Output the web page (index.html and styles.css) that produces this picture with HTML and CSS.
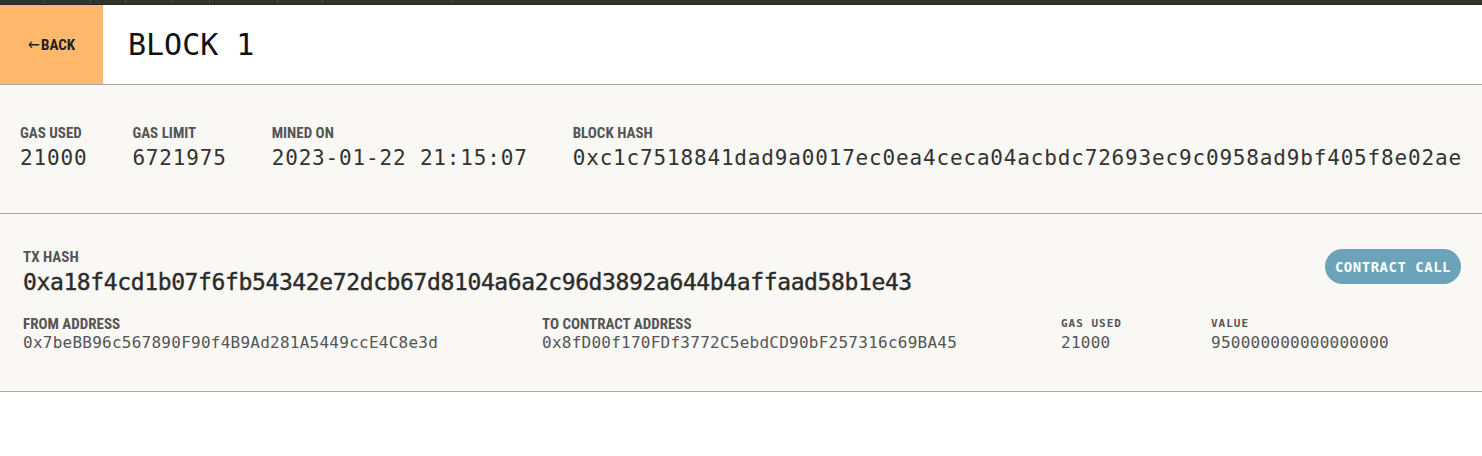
FILE: index.html
```html
<!DOCTYPE html>
<html lang="en">
<head>
<meta charset="utf-8">
<title>Block 1</title>
<link rel="stylesheet" href="styles.css">
</head>
<body>
<div class="topbar">
  <span class="tab tab-a"></span><span class="tab tab-b"></span><span class="tab tab-c"></span><span class="tab tab-d"></span><span class="tab tab-e"></span><span class="tab tab-f"></span><span class="tab tab-g"></span><span class="tab tab-h"></span>
</div>
<header class="header">
  <a class="back" href="#"><span class="arrow">&larr;</span>BACK</a>
  <h1 class="title">BLOCK 1</h1>
</header>
<section class="block-info">
  <div class="stat"><div class="label">GAS USED</div><div class="value">21000</div></div>
  <div class="stat"><div class="label">GAS LIMIT</div><div class="value">6721975</div></div>
  <div class="stat"><div class="label">MINED ON</div><div class="value">2023-01-22 21:15:07</div></div>
  <div class="stat"><div class="label">BLOCK HASH</div><div class="value">0xc1c7518841dad9a0017ec0ea4ceca04acbdc72693ec9c0958ad9bf405f8e02ae</div></div>
</section>
<section class="tx">
  <div class="tx-top">
    <div class="tx-id">
      <div class="label">TX HASH</div>
      <div class="tx-hash">0xa18f4cd1b07f6fb54342e72dcb67d8104a6a2c96d3892a644b4affaad58b1e43</div>
    </div>
    <span class="pill">CONTRACT CALL</span>
  </div>
  <div class="tx-grid">
    <div class="cell"><div class="label">FROM ADDRESS</div><div class="addr">0x7beBB96c567890F90f4B9Ad281A5449ccE4C8e3d</div></div>
    <div class="cell"><div class="label">TO CONTRACT ADDRESS</div><div class="addr">0x8fD00f170FDf3772C5ebdCD90bF257316c69BA45</div></div>
    <div class="cell"><div class="label label-mono">GAS USED</div><div class="addr">21000</div></div>
    <div class="cell"><div class="label label-mono">VALUE</div><div class="addr">950000000000000000</div></div>
  </div>
</section>
</body>
</html>
```
FILE: styles.css
```css
* { box-sizing: border-box; }
html, body { margin: 0; padding: 0; background: #ffffff; }
body { font-family: "DejaVu Sans Mono", monospace; color: #333; }

.topbar {
  display: flex;
  height: 5px;
  background: #34302c;
  border-bottom: 1px solid #2a2724;
}
.tab { height: 100%; border-right: 1px solid #4a4541; }
.tab-a { width: 44px; }
.tab-b { width: 47px; }
.tab-c { width: 35px; }
.tab-d { width: 47px; }
.tab-e { width: 37px; }
.tab-f { width: 68px; }
.tab-g { width: 45px; }
.tab-h { width: 129px; }

.header {
  display: flex;
  align-items: center;
  height: 80px;
  border-bottom: 1px solid #a8a7a5;
  background: #fff;
}
.back {
  display: flex;
  align-items: center;
  justify-content: center;
  gap: 1px;
  width: 103px;
  height: 100%;
  background: #ffb86c;
  color: #222;
  text-decoration: none;
  font-family: "Roboto Condensed", "DejaVu Sans Condensed", "Liberation Sans Narrow", sans-serif;
  font-stretch: condensed;
  font-weight: 700;
  font-size: 15px;
}
.arrow {
  font-family: "DejaVu Sans", sans-serif;
  font-weight: 400;
  font-size: 16px;
  line-height: 1;
}
.title {
  margin: 0 0 0 25px;
  font-family: "DejaVu Sans Mono", monospace;
  font-weight: 400;
  font-size: 30px;
  color: #111;
}

.label {
  font-family: "Roboto Condensed", "DejaVu Sans Condensed", "Liberation Sans Narrow", sans-serif;
  font-stretch: condensed;
  font-weight: 700;
  font-size: 15px;
  line-height: 16px;
  color: #555;
}
.label-mono {
  font-family: "DejaVu Sans Mono", monospace;
  font-stretch: normal;
  font-size: 11px;
  letter-spacing: 1px;
}

.block-info {
  display: flex;
  gap: 45px;
  padding: 40px 20px 42px;
  background: #f9f8f5;
  border-bottom: 1px solid #a8a7a5;
}
.value {
  margin-top: 4px;
  font-size: 21px;
  line-height: 26px;
  letter-spacing: 0.83px;
  color: #333;
  white-space: nowrap;
}

.tx {
  padding: 35px 21px 37px 23px;
  background: #f9f8f5;
  border-bottom: 1px solid #a8a7a5;
}
.tx-top {
  display: flex;
  justify-content: space-between;
  align-items: flex-start;
}
.tx-hash {
  margin-top: 2px;
  font-size: 23px;
  line-height: 30px;
  font-weight: 400;
  -webkit-text-stroke: 0.4px #2b2b2b;
  letter-spacing: -0.38px;
  color: #2b2b2b;
  white-space: nowrap;
}
.pill {
  display: inline-flex;
  align-items: center;
  height: 35px;
  padding: 0 10px;
  border-radius: 18px;
  background: #6ca3b8;
  color: #fff;
  font-weight: 700;
  font-size: 14px;
  letter-spacing: 0.5px;
}
.tx-grid {
  display: grid;
  grid-template-columns: 519px 519px 150px 1fr;
  margin-top: 19px;
}
.addr {
  font-size: 16px;
  line-height: 22px;
  letter-spacing: 0.25px;
  color: #555;
  white-space: nowrap;
}
```
